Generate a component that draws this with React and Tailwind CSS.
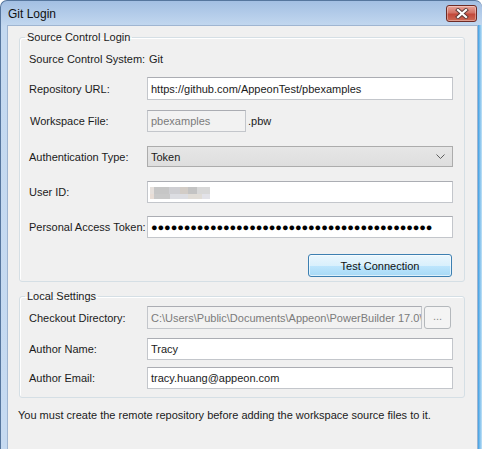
import React from "react";

const Label = ({ children }) => (
  <div className="w-[118px] shrink-0">{children}</div>
);

const TextBox = ({ children, disabled, className = "" }) => (
  <div
    className={`flex h-full items-center border border-[#c3c6cb] border-t-[#abadb3] pl-[3px] ${
      disabled ? "bg-[#f2f2f2] text-[#7b7b7b]" : "bg-white"
    } ${className}`}
  >
    {children}
  </div>
);

export default function App() {
  const blur = [
    ["#e6e0dc", 148, 4, 0],
    ["#c6c6c6", 152, 15, 0],
    ["#cfcfd3", 167, 11, 0],
    ["#d2ccc6", 178, 8, 0],
    ["#c3c3c3", 186, 9, 0],
    ["#d8d8d8", 195, 13, 0],
    ["#e8ddd6", 148, 4, 1],
    ["#c9c9c9", 152, 16, 1],
    ["#dcdde2", 168, 18, 1],
    ["#e0dcd6", 186, 14, 1],
    ["#e2e2e8", 200, 8, 1],
  ];

  return (
    <div className="h-[449px] w-[482px] overflow-hidden bg-white font-['Liberation_Sans',Arial,sans-serif] text-[11px] leading-[14px] text-[#1b1b1b]">
      <div className="flex h-full flex-col rounded-t-[7px] border-l border-t border-[#56769e] bg-[linear-gradient(#a3bfe3_0px,#c4d9f0_26px,#c6daf1_100%)]">
        {/* title bar */}
        <div className="flex h-[24px] shrink-0 items-start justify-between pl-[7px] pr-[5px]">
          <span className="mt-[6px] text-[12px] leading-[14px] text-[#111]">Git Login</span>
          <button className="mt-[4px] flex h-[17px] w-[31px] items-center justify-center rounded-[3px] border border-[#6e2b25] bg-[linear-gradient(#e8a398,#d27265_45%,#c2483a_55%,#cd6a55)] shadow-[inset_0_0_0_1px_rgba(255,255,255,0.35)]">
            <svg width="14" height="11" viewBox="0 0 14 11">
              <path d="M3 2 L11 9 M11 2 L3 9" stroke="#5a3a38" strokeWidth="4" strokeLinecap="square" />
              <path d="M3 2 L11 9 M11 2 L3 9" stroke="#ffffff" strokeWidth="2.2" strokeLinecap="square" />
            </svg>
          </button>
        </div>

        {/* frame + client */}
        <div className="flex flex-1">
          <div className="w-[6px] shrink-0" />
          <div className="flex-1 border-l border-t border-r border-[#9fb5d1] bg-[#f0f0f0]">
            <fieldset className="ml-[11px] mt-[4px] w-[446px] rounded-[3px] border border-[#d5dfe5] pb-[4px] pl-[9px] pr-[11px] pt-[4px] shadow-[inset_1px_1px_0_#fff]">
              <legend className="ml-[-4px] px-[2px] leading-[14px]">Source Control Login</legend>

              <div className="flex h-[22px] items-center">
                <Label>Source Control System:</Label>
                <span className="pl-[2px]">Git</span>
              </div>

              <div className="mt-[7px] flex h-[23px] items-center">
                <Label>Repository URL:</Label>
                <TextBox className="flex-1">https://github.com/AppeonTest/pbexamples</TextBox>
              </div>

              <div className="mt-[10px] flex h-[22px] items-center">
                <Label>
                  <span className="pl-[1px]">Workspace File:</span>
                </Label>
                <TextBox disabled className="w-[99px]">pbexamples</TextBox>
                <span className="pl-[2px]">.pbw</span>
              </div>

              <div className="mt-[14px] flex h-[21px] items-center">
                <Label>Authentication Type:</Label>
                <div className="flex h-full flex-1 items-center justify-between border border-[#acacac] bg-[linear-gradient(#e6e6e6,#dedede)] pl-[3px] pr-[7px]">
                  <span>Token</span>
                  <svg width="9" height="5" viewBox="0 0 9 5">
                    <polyline points="0.5,0.5 4.5,4.5 8.5,0.5" fill="none" stroke="#5d5d5d" strokeWidth="1" />
                  </svg>
                </div>
              </div>

              <div className="mt-[14px] flex h-[22px] items-center">
                <Label>User ID:</Label>
                <TextBox className="flex-1">
                  <svg width="62" height="14" viewBox="147 181 62 14" className="ml-[-2px]">
                    {blur.map(([c, x, w, r], i) => (
                      <rect key={i} x={x} y={r ? 190 : 183} width={w} height={7} fill={c} />
                    ))}
                  </svg>
                </TextBox>
              </div>

              <div className="mt-[13px] flex h-[22px] items-center">
                <Label>Personal Access Token:</Label>
                <TextBox className="flex-1">
                  <span className="text-[11px] tracking-[-0.1px] text-black">
                    {"●".repeat(43)}
                  </span>
                </TextBox>
              </div>

              <div className="mt-[16px] flex h-[23px] justify-end">
                <button className="mr-[1px] h-full w-[144px] rounded-[3px] border border-[#3c7fb1] bg-[linear-gradient(#eaf6fd,#d9f0fc_50%,#bee6fd_50%,#a7d9f5)] text-[#111] shadow-[inset_0_0_0_1px_rgba(255,255,255,0.6)]">
                  Test Connection
                </button>
              </div>
            </fieldset>

            <fieldset className="ml-[11px] mt-[7px] w-[446px] rounded-[3px] border border-[#d5dfe5] pb-[8px] pl-[9px] pr-[11px] pt-[3px] shadow-[inset_1px_1px_0_#fff]">
              <legend className="ml-[-4px] px-[2px] leading-[14px]">Local Settings</legend>

              <div className="flex h-[23px] items-center">
                <Label>Checkout Directory:</Label>
                <TextBox disabled className="w-[275px] overflow-hidden whitespace-nowrap">
                  C:\Users\Public\Documents\Appeon\PowerBuilder 17.0\
                </TextBox>
                <button className="ml-[2px] h-full w-[27px] rounded-[3px] border border-[#b4b8bc] bg-[#f4f4f4] pb-[4px] text-[#8a8a8a]">
                  ...
                </button>
              </div>

              <div className="mt-[9px] flex h-[22px] items-center">
                <Label>Author Name:</Label>
                <TextBox className="flex-1">Tracy</TextBox>
              </div>

              <div className="mt-[7px] flex h-[22px] items-center">
                <Label>Author Email:</Label>
                <TextBox className="flex-1">tracy.huang@appeon.com</TextBox>
              </div>
            </fieldset>

            <p className="ml-[10px] mt-[10px]">
              You must create the remote repository before adding the workspace source files to it.
            </p>
          </div>
          <div className="w-[4px] shrink-0 bg-[linear-gradient(to_right,#3f9fe3,#c3e2f6)]" />
        </div>
      </div>
    </div>
  );
}
